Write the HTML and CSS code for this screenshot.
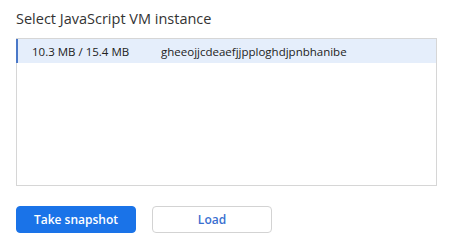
FILE: index.html
```html
<!DOCTYPE html>
<html lang="en">
<head>
  <meta charset="UTF-8">
  <title>Select JavaScript VM instance</title>
  <link rel="stylesheet" href="styles.css">
</head>
<body>
  <div class="dialog">
    <div class="dialog-title">Select JavaScript VM instance</div>
    <div class="vm-list">
      <div class="vm-row selected">
        <span class="vm-size">10.3 MB / 15.4 MB</span>
        <span class="vm-name">gheeojjcdeaefjjpploghdjpnbhanibe</span>
      </div>
    </div>
    <div class="dialog-buttons">
      <button class="btn btn-primary">Take snapshot</button>
      <button class="btn">Load</button>
    </div>
  </div>
</body>
</html>
```

FILE: styles.css
```css
html, body {
  margin: 0;
  padding: 0;
  background: #fff;
}

.dialog {
  font-family: "Open Sans", "Noto Sans", sans-serif;
  color: #202124;
  padding: 9px 15px 0 16px;
  width: 421px;
}

.dialog-title {
  font-size: 14.5px;
  line-height: 20px;
  color: #333;
  margin-bottom: 9px;
}

.vm-list {
  border: 1px solid #d6d6d6;
  height: 148px;
  box-sizing: border-box;
}

.vm-row {
  display: flex;
  align-items: center;
  height: 24px;
  font-size: 11.5px;
  color: #222;
  padding-left: 15px;
}
.vm-row.selected {
  background: #e5eefb;
  border-left: 2px solid #4a78c8;
  padding-left: 14px;
  margin-left: -1px;
}
.vm-size {
  width: 129px;
}

.dialog-buttons {
  display: flex;
  gap: 16px;
  margin-top: 20px;
}

.btn {
  font-family: "Open Sans", "Noto Sans", sans-serif;
  font-size: 12px;
  font-weight: 600;
  width: 120px;
  height: 27px;
  border-radius: 4px;
  border: 1px solid #d3d3d3;
  background: #fff;
  color: #3a6fd0;
  padding: 0;
}
.btn-primary {
  background: #1a73e8;
  border-color: #1a73e8;
  color: #fff;
}
```
